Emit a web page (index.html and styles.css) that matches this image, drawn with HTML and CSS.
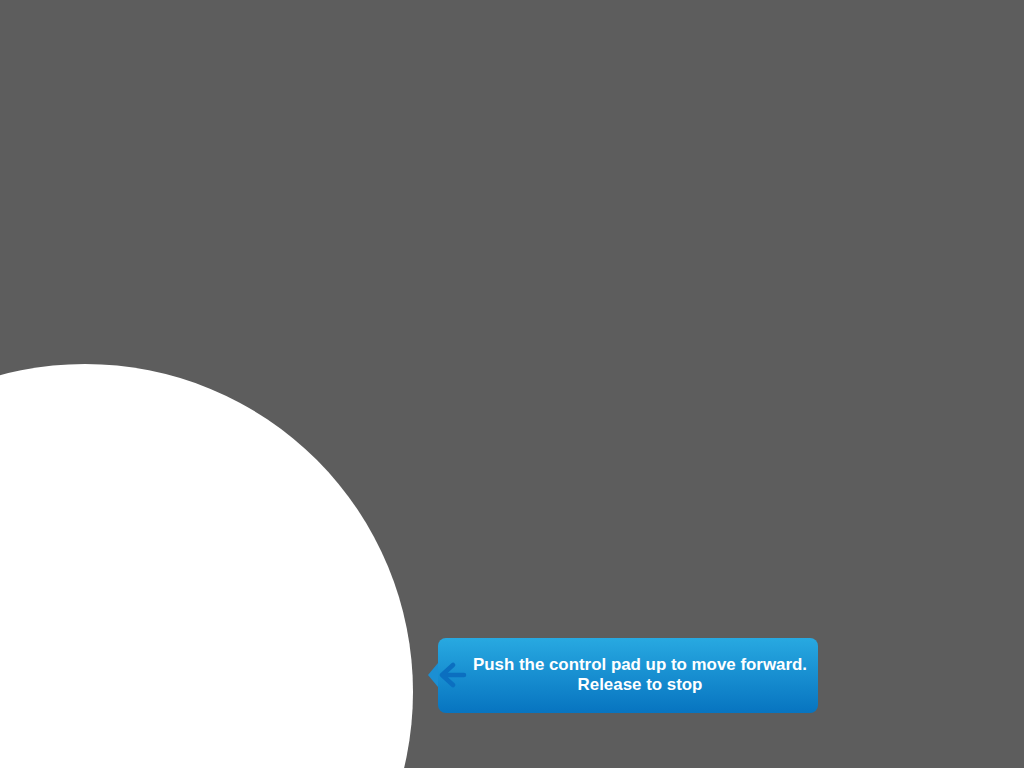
FILE: index.html
```html
<!DOCTYPE html>
<html>
<head>
<meta charset="utf-8">
<link rel="stylesheet" href="styles.css">
</head>
<body>
<div class="stage">
  <div class="pad"></div>
  <div class="tip">
    <svg class="arrow" width="34" height="28" viewBox="0 0 34 28">
      <path d="M31 13 H10 M20 3 L9 13 L20 23" fill="none" stroke="#0b6fc0" stroke-width="4.5" stroke-linecap="round" stroke-linejoin="round"/>
    </svg>
    <div class="text">Push the control pad up to move forward.<br>Release to stop</div>
  </div>
</div>
</body>
</html>
```
FILE: styles.css
```css
html, body {
  margin: 0;
  padding: 0;
  width: 1024px;
  height: 768px;
  overflow: hidden;
  background: #5d5d5d;
}
.stage {
  position: relative;
  width: 1024px;
  height: 768px;
  overflow: hidden;
}
.pad {
  position: absolute;
  left: -243px;
  top: 364px;
  width: 656px;
  height: 656px;
  border-radius: 50%;
  background: #ffffff;
}
.tip {
  position: absolute;
  left: 438px;
  top: 638px;
  width: 380px;
  height: 75px;
  border-radius: 8px;
  background: linear-gradient(#28a9e1, #0774c0);
  display: flex;
  align-items: center;
  box-sizing: border-box;
  padding-left: 30px;
}
.tip::before {
  content: "";
  position: absolute;
  left: -10px;
  top: 25px;
  border-style: solid;
  border-width: 12px 10px 12px 0;
  border-color: transparent #1b8fd3 transparent transparent;
}
.arrow {
  position: absolute;
  left: -5px;
  top: 24px;
}
.text {
  flex: 1;
  text-align: center;
  color: #fff;
  font-family: "Liberation Sans", Arial, sans-serif;
  font-weight: bold;
  font-size: 16.9px;
  line-height: 20px;
  margin-top: -1px;
  padding-right: 6px;
  white-space: nowrap;
}
```
